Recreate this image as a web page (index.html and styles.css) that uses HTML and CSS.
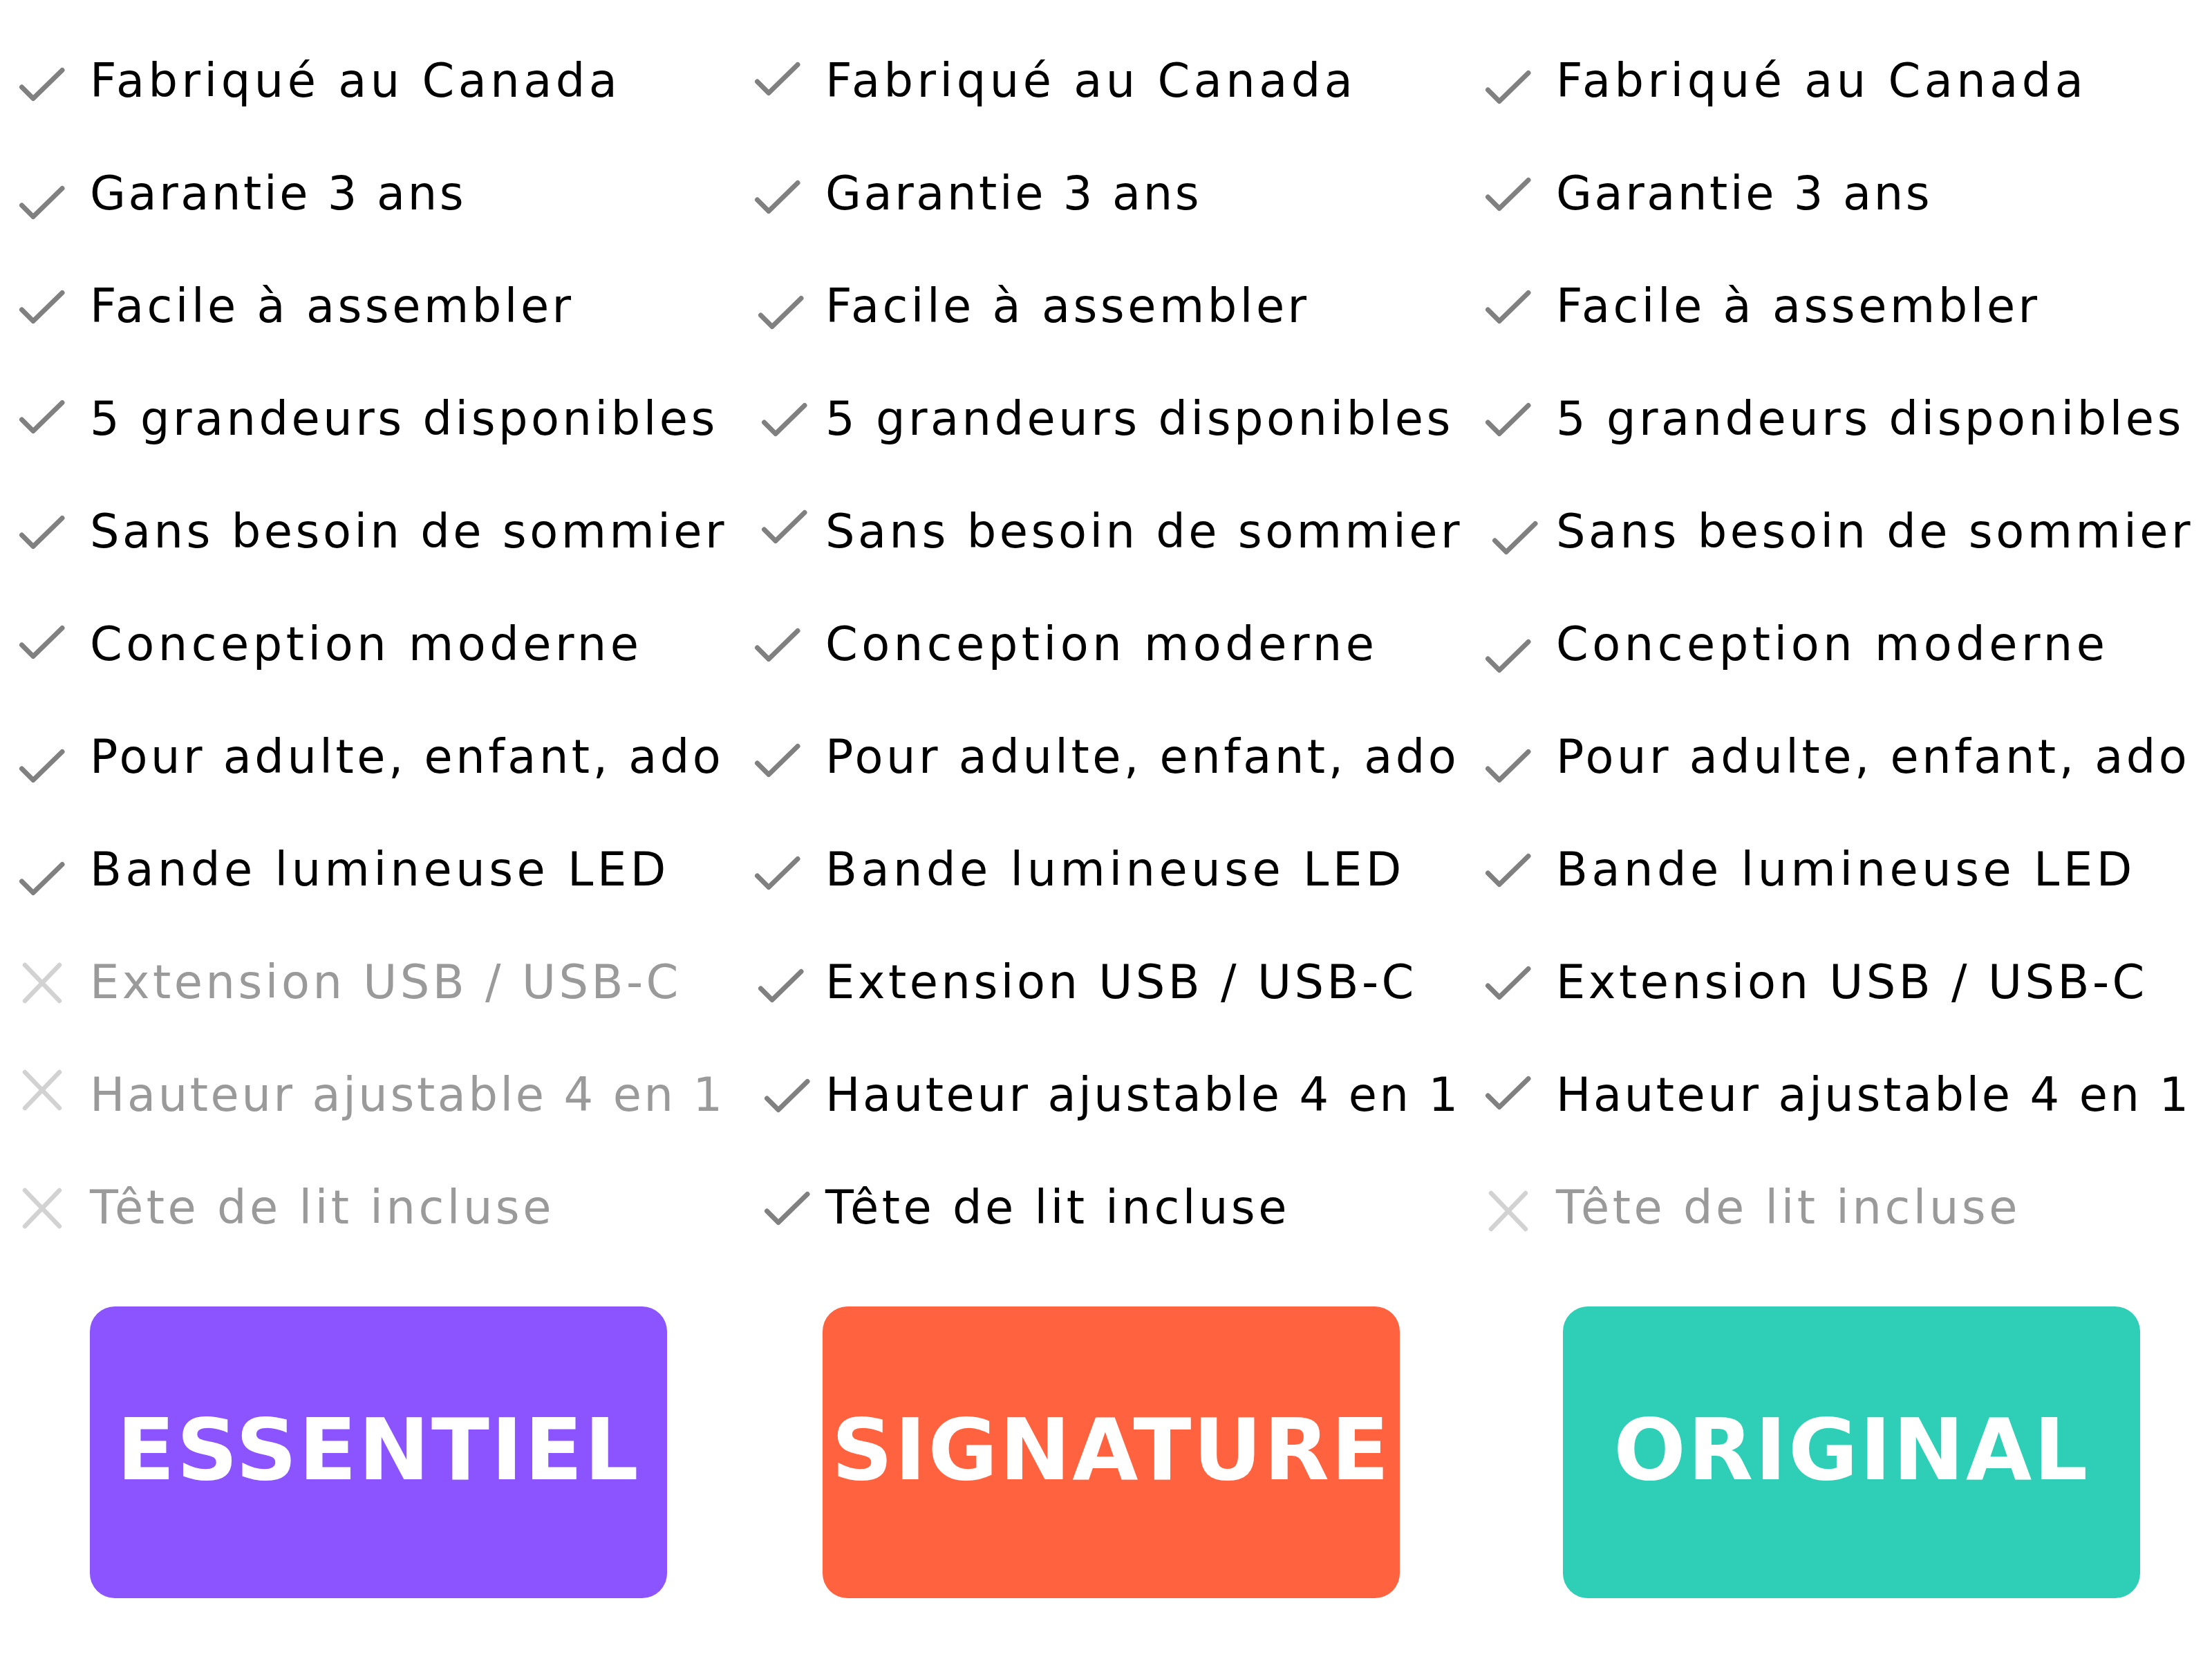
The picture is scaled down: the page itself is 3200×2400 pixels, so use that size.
FILE: index.html
```html
<!DOCTYPE html>
<html lang="fr">
<head>
<meta charset="utf-8">
<title>Comparatif des modèles</title>
<link rel="stylesheet" href="styles.css">
</head>
<body>
<svg class="defs" width="0" height="0" aria-hidden="true">
  <symbol id="chk" viewBox="0 0 67 50"><polyline points="4.5,29 21,45.5 63,4.5" fill="none" stroke="#808080" stroke-width="7" stroke-linecap="round" stroke-linejoin="round"/></symbol>
  <symbol id="cross" viewBox="0 0 58 60"><path d="M4 4 L54 56 M54 4 L4 56" fill="none" stroke="#d2d2d2" stroke-width="6.5" stroke-linecap="round"/></symbol>
</svg>
<main class="compare">
  <section class="plan plan-essentiel">
    <ul class="features">
      <li class="feat"><span class="ico d1"><svg class="chk"><use href="#chk"/></svg></span><span class="label loose">Fabriqué au Canada</span></li>
      <li class="feat"><span class="ico d3"><svg class="chk"><use href="#chk"/></svg></span><span class="label tight">Garantie 3 ans</span></li>
      <li class="feat"><span class="ico"><svg class="chk"><use href="#chk"/></svg></span><span class="label">Facile à assembler</span></li>
      <li class="feat"><span class="ico u1"><svg class="chk"><use href="#chk"/></svg></span><span class="label">5 grandeurs disponibles</span></li>
      <li class="feat"><span class="ico"><svg class="chk"><use href="#chk"/></svg></span><span class="label">Sans besoin de sommier</span></li>
      <li class="feat"><span class="ico u1"><svg class="chk"><use href="#chk"/></svg></span><span class="label loose">Conception moderne</span></li>
      <li class="feat"><span class="ico d3"><svg class="chk"><use href="#chk"/></svg></span><span class="label">Pour adulte, enfant, ado</span></li>
      <li class="feat"><span class="ico d3"><svg class="chk"><use href="#chk"/></svg></span><span class="label loose">Bande lumineuse LED</span></li>
      <li class="feat off"><span class="ico"><svg class="x"><use href="#cross"/></svg></span><span class="label">Extension USB / USB-C</span></li>
      <li class="feat off"><span class="ico u2"><svg class="x"><use href="#cross"/></svg></span><span class="label tight">Hauteur ajustable 4 en 1</span></li>
      <li class="feat off"><span class="ico"><svg class="x"><use href="#cross"/></svg></span><span class="label">Tête de lit incluse</span></li>
    </ul>
    <div class="badge badge-essentiel">ESSENTIEL</div>
  </section>

  <section class="plan plan-signature">
    <ul class="features">
      <li class="feat"><span class="ico u1"><svg class="chk"><use href="#chk"/></svg></span><span class="label loose">Fabriqué au Canada</span></li>
      <li class="feat"><span class="ico d1"><svg class="chk"><use href="#chk"/></svg></span><span class="label tight">Garantie 3 ans</span></li>
      <li class="feat"><span class="ico d2 r1"><svg class="chk"><use href="#chk"/></svg></span><span class="label">Facile à assembler</span></li>
      <li class="feat"><span class="ico r2"><svg class="chk"><use href="#chk"/></svg></span><span class="label">5 grandeurs disponibles</span></li>
      <li class="feat"><span class="ico u2 r2"><svg class="chk"><use href="#chk"/></svg></span><span class="label">Sans besoin de sommier</span></li>
      <li class="feat"><span class="ico"><svg class="chk"><use href="#chk"/></svg></span><span class="label loose">Conception moderne</span></li>
      <li class="feat"><span class="ico d1"><svg class="chk"><use href="#chk"/></svg></span><span class="label">Pour adulte, enfant, ado</span></li>
      <li class="feat"><span class="ico d1"><svg class="chk"><use href="#chk"/></svg></span><span class="label loose">Bande lumineuse LED</span></li>
      <li class="feat"><span class="ico d1 r1"><svg class="chk"><use href="#chk"/></svg></span><span class="label">Extension USB / USB-C</span></li>
      <li class="feat"><span class="ico r3"><svg class="chk"><use href="#chk"/></svg></span><span class="label tight">Hauteur ajustable 4 en 1</span></li>
      <li class="feat"><span class="ico r3"><svg class="chk"><use href="#chk"/></svg></span><span class="label">Tête de lit incluse</span></li>
    </ul>
    <div class="badge badge-signature">SIGNATURE</div>
  </section>

  <section class="plan plan-original">
    <ul class="features">
      <li class="feat"><span class="ico d2"><svg class="chk"><use href="#chk"/></svg></span><span class="label loose">Fabriqué au Canada</span></li>
      <li class="feat"><span class="ico"><svg class="chk"><use href="#chk"/></svg></span><span class="label tight">Garantie 3 ans</span></li>
      <li class="feat"><span class="ico"><svg class="chk"><use href="#chk"/></svg></span><span class="label">Facile à assembler</span></li>
      <li class="feat"><span class="ico"><svg class="chk"><use href="#chk"/></svg></span><span class="label">5 grandeurs disponibles</span></li>
      <li class="feat"><span class="ico d2 r2"><svg class="chk"><use href="#chk"/></svg></span><span class="label">Sans besoin de sommier</span></li>
      <li class="feat"><span class="ico d4"><svg class="chk"><use href="#chk"/></svg></span><span class="label loose">Conception moderne</span></li>
      <li class="feat"><span class="ico d3"><svg class="chk"><use href="#chk"/></svg></span><span class="label">Pour adulte, enfant, ado</span></li>
      <li class="feat"><span class="ico"><svg class="chk"><use href="#chk"/></svg></span><span class="label loose">Bande lumineuse LED</span></li>
      <li class="feat"><span class="ico"><svg class="chk"><use href="#chk"/></svg></span><span class="label">Extension USB / USB-C</span></li>
      <li class="feat"><span class="ico u1"><svg class="chk"><use href="#chk"/></svg></span><span class="label tight">Hauteur ajustable 4 en 1</span></li>
      <li class="feat off"><span class="ico d1"><svg class="x"><use href="#cross"/></svg></span><span class="label">Tête de lit incluse</span></li>
    </ul>
    <div class="badge badge-original">ORIGINAL</div>
  </section>
</main>
</body>
</html>
```

FILE: styles.css
```css
* { box-sizing: border-box; }

html, body {
  margin: 0;
  padding: 0;
  background: #ffffff;
}

body {
  font-family: "DejaVu Sans", "Liberation Sans", sans-serif;
  color: #000000;
}

.defs {
  position: absolute;
  width: 0;
  height: 0;
  overflow: hidden;
}

.compare {
  display: grid;
  grid-template-columns: 1064px 1057px 1050px;
  padding: 36px 0 0 27px;
}

.plan {
  display: flex;
  flex-direction: column;
}

.features {
  list-style: none;
  margin: 0;
  padding: 0;
}

.feat {
  display: flex;
  align-items: center;
  gap: 36px;
  height: 163px;
  font-size: 67px;
  line-height: 163px;
  letter-spacing: 4.5px;
  white-space: nowrap;
}

.label.tight { letter-spacing: 3.6px; }
.label.loose { letter-spacing: 5.5px; }

.feat.off .label {
  color: #9a9a9a;
}

.ico {
  flex: 0 0 67px;
  width: 67px;
  height: 60px;
  display: flex;
  align-items: center;
  justify-content: center;
}

.chk {
  width: 67px;
  height: 50px;
  display: block;
}

.x {
  width: 58px;
  height: 60px;
  display: block;
}

/* slight hand-placed offsets of the icons */
.u1 { transform: translateY(-4px); }
.u2 { transform: translateY(-8px); }
.d1 { transform: translateY(4px); }
.d2 { transform: translateY(8px); }
.d3 { transform: translateY(12px); }
.d4 { transform: translateY(16px); }
.r1 { margin-left: 5px; margin-right: -5px; }
.r2 { margin-left: 10px; margin-right: -10px; }
.r3 { margin-left: 14px; margin-right: -14px; }

.badge {
  margin-top: 61px;
  margin-left: 103px;
  width: 835px;
  height: 422px;
  border-radius: 36px;
  display: flex;
  align-items: center;
  justify-content: center;
  color: #ffffff;
  font-family: "DejaVu Sans", "Liberation Sans", sans-serif;
  font-weight: 700;
  font-size: 123px;
  letter-spacing: 2.5px;
  line-height: 1;
  white-space: nowrap;
  padding-bottom: 8px;
}

.badge-essentiel { background: #8c54ff; }
.badge-signature { background: #ff623f; margin-left: 99px; }
.badge-original { background: #2ecfb6; margin-left: 113px; }
```
